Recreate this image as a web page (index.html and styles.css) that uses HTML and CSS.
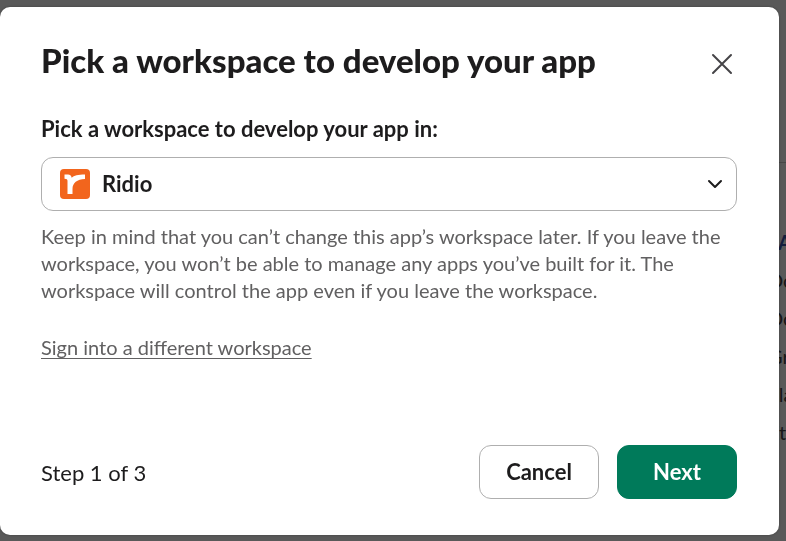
FILE: index.html
```html
<!DOCTYPE html>
<html lang="en">
<head>
    <meta charset="UTF-8">
    <meta name="viewport" content="width=device-width, initial-scale=1.0">
    <title>Pick a workspace to develop your app</title>
    <link rel="stylesheet" href="styles.css">
</head>
<body>
    <div class="page">
        <nav class="sidebar">
            <a href="#" class="sidebar-link active">IA</a>
            <a href="#" class="sidebar-link">Do</a>
            <a href="#" class="sidebar-link">Do</a>
            <a href="#" class="sidebar-link">Gr</a>
            <a href="#" class="sidebar-link">Sla</a>
            <a href="#" class="sidebar-link">Et</a>
        </nav>
    </div>

    <div class="overlay">
        <form class="modal" role="dialog" aria-labelledby="modalTitle">
            <div class="modal-header">
                <h1 class="modal-title" id="modalTitle">Pick a workspace to develop your app</h1>
                <button type="button" class="close-button" aria-label="Close">
                    <svg width="24" height="24" viewBox="0 0 24 24" fill="none" stroke="#454447" stroke-width="2" stroke-linecap="round">
                        <path d="M3 3l18 18M21 3L3 21"/>
                    </svg>
                </button>
            </div>

            <label class="field-label" for="workspace">Pick a workspace to develop your app in:</label>
            <div class="select-box">
                <svg class="workspace-logo" width="30" height="30" viewBox="0 0 30 30">
                    <rect width="30" height="30" rx="4" fill="#f2651d"/>
                    <path d="M4.500 5.500h3.500c2 0 3.200 1.200 3.700 3.200C14 6.500 18 5.500 25 5.500v4.500c-8 .3-12.500 4-12.500 10V25H7.500V12c0-1.500-.7-2.200-3-2.200z" fill="#fff"/>
                </svg>
                <select class="workspace-select" id="workspace">
                    <option>Ridio</option>
                </select>
                <svg class="chevron" width="16" height="16" viewBox="0 0 16 16" fill="none" stroke="#1d1c1d" stroke-width="2" stroke-linecap="round" stroke-linejoin="round">
                    <path d="M2 5l6 6 6-6"/>
                </svg>
            </div>

            <p class="hint">Keep in mind that you can’t change this app’s workspace later. If you leave the workspace, you won’t be able to manage any apps you’ve built for it. The workspace will control the app even if you leave the workspace.</p>
            <a href="#" class="signin-link">Sign into a different workspace</a>

            <div class="modal-footer">
                <span class="step">Step 1 of 3</span>
                <button type="button" class="button">Cancel</button>
                <button type="submit" class="button primary">Next</button>
            </div>
        </form>
    </div>
</body>
</html>
```
FILE: styles.css
```css
* {
    margin: 0;
    padding: 0;
    box-sizing: border-box;
    font-family: Lato, sans-serif;
}

body {
    background-color: #fff;
    color: #1d1c1d;
    font-size: 22px;
    overflow: hidden;
}

.page {
    display: flex;
    justify-content: flex-end;
    padding-top: 162px;
}

.sidebar {
    width: 18px;
    padding-top: 60px;
    border-top: 1px solid #ccc;
    display: flex;
    flex-direction: column;
}

.sidebar-link {
    color: #454447;
    font-size: 20px;
    line-height: 38px;
    white-space: nowrap;
    text-decoration: none;
}

.sidebar-link.active {
    padding-left: 4px;
    color: #3a58b0;
    font-weight: bold;
}

/* dark layer over the page, holds the dialog */
.overlay {
    position: fixed;
    inset: 0;
    padding: 7px 7px 6px 0;
    background-color: rgba(0, 0, 0, 0.65);
}

.modal {
    height: 100%;
    padding: 32px 42px 36px 41px;
    border-radius: 10px;
    background-color: #fff;
    box-shadow: 0 0 3px rgba(0, 0, 0, 0.3);
    display: flex;
    flex-direction: column;
}

.modal-header {
    display: flex;
    justify-content: space-between;
    align-items: flex-end;
    margin-bottom: 33px;
}

.modal-title {
    font-size: 33px;
    line-height: 42px;
    font-weight: 900;
}

.close-button {
    width: 30px;
    height: 34px;
    border: none;
    background: none;
    display: flex;
    align-items: center;
    justify-content: center;
    cursor: pointer;
}

.field-label {
    font-weight: bold;
    line-height: 30px;
    margin-bottom: 13px;
}

.select-box {
    position: relative;
    display: flex;
    align-items: center;
    margin-bottom: 12px;
}

.workspace-logo {
    position: absolute;
    left: 19px;
    pointer-events: none;
}

.workspace-select {
    appearance: none;
    width: 100%;
    height: 54px;
    padding: 0 60px 2px;
    border: 1px solid #afafaf;
    border-radius: 12px;
    background-color: #fff;
    color: #1d1c1d;
    font-size: 22px;
    font-weight: bold;
}

.chevron {
    position: absolute;
    right: 14px;
    pointer-events: none;
}

.hint {
    color: #616061;
    font-size: 20px;
    line-height: 27px;
    margin-bottom: 30px;
}

.signin-link {
    align-self: flex-start;
    color: #616061;
    font-size: 20px;
    line-height: 27px;
    text-decoration-thickness: 1px;
    text-decoration-skip-ink: none;
    text-underline-offset: 3px;
}

.modal-footer {
    display: flex;
    align-items: center;
    gap: 18px;
    margin-top: auto;
}

.step {
    margin-right: auto;
}

.button {
    width: 120px;
    height: 54px;
    padding-bottom: 2px;
    border: 1px solid #afafaf;
    border-radius: 12px;
    background-color: #fff;
    color: #1d1c1d;
    font-size: 22px;
    font-weight: bold;
    cursor: pointer;
}

.button.primary {
    border-color: #007a5a;
    background-color: #007a5a;
    color: #fff;
}
```
